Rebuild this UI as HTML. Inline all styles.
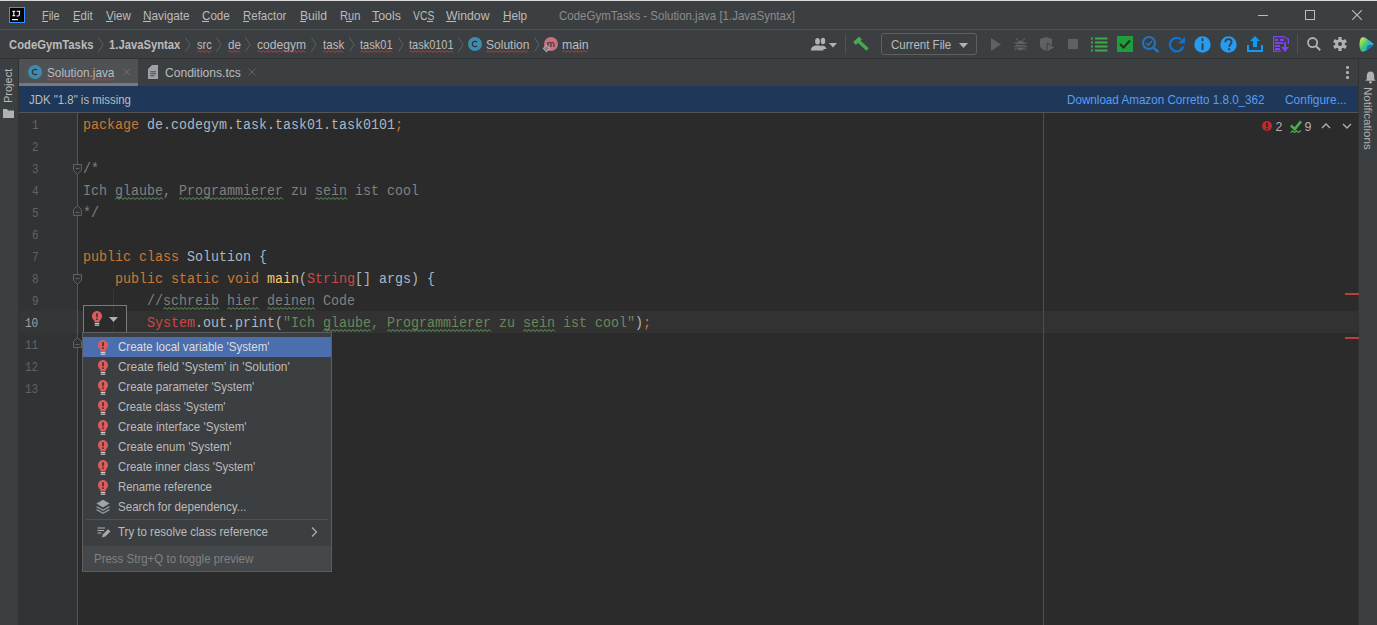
<!DOCTYPE html>
<html><head><meta charset="utf-8"><style>
html,body{margin:0;padding:0;}
body{width:1377px;height:625px;overflow:hidden;position:relative;background:#2B2B2B;}
body>div,body>svg{position:absolute;}
.t{white-space:pre;line-height:0;height:0;}
</style></head><body>
<div style="left:0px;top:0px;width:1377px;height:1px;background:#d9d9d9;"></div>
<div style="left:0px;top:1px;width:1377px;height:28px;background:#3C3F41;"></div>
<div style="left:0px;top:29px;width:1377px;height:1px;background:#515151;"></div>
<div style="left:0px;top:30px;width:1377px;height:28px;background:#3C3F41;"></div>
<div style="left:0px;top:58px;width:1377px;height:1px;background:#323232;"></div>
<div style="left:0px;top:59px;width:18px;height:566px;background:#3C3F41;"></div>
<div style="left:18px;top:59px;width:1px;height:566px;background:#323232;"></div>
<div style="left:1359px;top:59px;width:18px;height:566px;background:#3C3F41;"></div>
<div style="left:1358px;top:59px;width:1px;height:566px;background:#323232;"></div>
<div style="left:19px;top:59px;width:1339px;height:27px;background:#3C3F41;"></div>
<div style="left:19px;top:59px;width:119px;height:24px;background:#4E5254;"></div>
<div style="left:19px;top:83px;width:119px;height:3px;background:#747A80;"></div>
<div style="left:19px;top:86px;width:1339px;height:26px;background:#1F3859;"></div>
<div style="left:19px;top:112px;width:1339px;height:1px;background:#555555;"></div>
<div style="left:19px;top:113px;width:58px;height:512px;background:#313335;"></div>
<div style="left:77px;top:113px;width:1px;height:512px;background:#555555;"></div>
<div style="left:19px;top:311px;width:58px;height:22px;background:#343638;"></div>
<div style="left:78px;top:311px;width:1280px;height:22px;background:#323232;"></div>
<div style="left:1043px;top:113px;width:1px;height:512px;background:#4F4F4F;"></div>
<svg style="left:9px;top:7px;" width="16" height="16" viewBox="0 0 16 16" preserveAspectRatio="none"><rect x="0.5" y="0.5" width="15" height="15" fill="#000" stroke="#3592FF" stroke-width="1"/><path d="M3.3 4.2H6.3M4.8 4.2V8.8M3.3 8.8H6.3" stroke="#fff" stroke-width="1.1"/><path d="M7.6 4.2H11.2M10.4 4.2V7.6C10.4 8.5 9.8 9 9 9H7.6" fill="none" stroke="#fff" stroke-width="1.1"/><rect x="3" y="12" width="6" height="1.2" fill="#fff"/></svg>
<div class="t" style="left:42.3px;top:15.70px;font-family:'Liberation Sans', sans-serif;font-size:12.4px;color:#BBBBBB;transform:scale(0.8758,1.0000);transform-origin:0 4.30px;">File</div>
<div class="t" style="left:73px;top:15.70px;font-family:'Liberation Sans', sans-serif;font-size:12.4px;color:#BBBBBB;transform:scale(0.9220,1.0000);transform-origin:0 4.30px;">Edit</div>
<div class="t" style="left:106px;top:15.70px;font-family:'Liberation Sans', sans-serif;font-size:12.4px;color:#BBBBBB;transform:scale(0.9380,1.0000);transform-origin:0 4.30px;">View</div>
<div class="t" style="left:143.3px;top:15.70px;font-family:'Liberation Sans', sans-serif;font-size:12.4px;color:#BBBBBB;transform:scale(0.9542,1.0000);transform-origin:0 4.30px;">Navigate</div>
<div class="t" style="left:202px;top:15.70px;font-family:'Liberation Sans', sans-serif;font-size:12.4px;color:#BBBBBB;transform:scale(0.9378,1.0000);transform-origin:0 4.30px;">Code</div>
<div class="t" style="left:243.4px;top:15.70px;font-family:'Liberation Sans', sans-serif;font-size:12.4px;color:#BBBBBB;transform:scale(0.9261,1.0000);transform-origin:0 4.30px;">Refactor</div>
<div class="t" style="left:299.8px;top:15.70px;font-family:'Liberation Sans', sans-serif;font-size:12.4px;color:#BBBBBB;transform:scale(0.9792,1.0000);transform-origin:0 4.30px;">Build</div>
<div class="t" style="left:339.5px;top:15.70px;font-family:'Liberation Sans', sans-serif;font-size:12.4px;color:#BBBBBB;transform:scale(0.8968,1.0000);transform-origin:0 4.30px;">Run</div>
<div class="t" style="left:372px;top:15.70px;font-family:'Liberation Sans', sans-serif;font-size:12.4px;color:#BBBBBB;">Tools</div>
<div class="t" style="left:413px;top:15.70px;font-family:'Liberation Sans', sans-serif;font-size:12.4px;color:#BBBBBB;transform:scale(0.8393,1.0000);transform-origin:0 4.30px;">VCS</div>
<div class="t" style="left:446.3px;top:15.70px;font-family:'Liberation Sans', sans-serif;font-size:12.4px;color:#BBBBBB;transform:scale(0.9863,1.0000);transform-origin:0 4.30px;">Window</div>
<div class="t" style="left:503.4px;top:15.70px;font-family:'Liberation Sans', sans-serif;font-size:12.4px;color:#BBBBBB;transform:scale(0.9450,1.0000);transform-origin:0 4.30px;">Help</div>
<div class="t" style="left:558.5px;top:15.70px;font-family:'Liberation Sans', sans-serif;font-size:12.4px;color:#8C8C8C;transform:scale(0.9280,1.0000);transform-origin:0 4.30px;">CodeGymTasks - Solution.java [1.JavaSyntax]</div>
<div style="left:1258px;top:15px;width:10px;height:1px;background:#BBBBBB;"></div>
<div style="left:1305px;top:10px;width:10px;height:10px;background:transparent;box-sizing:border-box;border:1px solid #BBBBBB;"></div>
<svg style="left:1352px;top:10px;" width="10" height="10" viewBox="0 0 10 10" preserveAspectRatio="none"><path d="M0 0L10 10M10 0L0 10" stroke="#BBBBBB" stroke-width="1.1"/></svg>
<div class="t" style="left:8.7px;top:44.70px;font-family:'Liberation Sans', sans-serif;font-size:12.4px;color:#BBBBBB;font-weight:bold;transform:scale(0.9105,1.0000);transform-origin:0 4.30px;">CodeGymTasks</div>
<div class="t" style="left:109.4px;top:44.70px;font-family:'Liberation Sans', sans-serif;font-size:12.4px;color:#BBBBBB;font-weight:bold;transform:scale(0.9085,1.0000);transform-origin:0 4.30px;">1.JavaSyntax</div>
<div class="t" style="left:197px;top:44.70px;font-family:'Liberation Sans', sans-serif;font-size:12.4px;color:#BBBBBB;transform:scale(0.8954,1.0000);transform-origin:0 4.30px;">src</div>
<div class="t" style="left:228px;top:44.70px;font-family:'Liberation Sans', sans-serif;font-size:12.4px;color:#BBBBBB;transform:scale(0.9425,1.0000);transform-origin:0 4.30px;">de</div>
<div class="t" style="left:257px;top:44.70px;font-family:'Liberation Sans', sans-serif;font-size:12.4px;color:#BBBBBB;transform:scale(0.9739,1.0000);transform-origin:0 4.30px;">codegym</div>
<div class="t" style="left:322.9px;top:44.70px;font-family:'Liberation Sans', sans-serif;font-size:12.4px;color:#BBBBBB;transform:scale(0.9366,1.0000);transform-origin:0 4.30px;">task</div>
<div class="t" style="left:360px;top:44.70px;font-family:'Liberation Sans', sans-serif;font-size:12.4px;color:#BBBBBB;transform:scale(0.8923,1.0000);transform-origin:0 4.30px;">task01</div>
<div class="t" style="left:409px;top:44.70px;font-family:'Liberation Sans', sans-serif;font-size:12.4px;color:#BBBBBB;transform:scale(0.8862,1.0000);transform-origin:0 4.30px;">task0101</div>
<div class="t" style="left:486.3px;top:44.70px;font-family:'Liberation Sans', sans-serif;font-size:12.4px;color:#BBBBBB;transform:scale(0.9707,1.0000);transform-origin:0 4.30px;">Solution</div>
<div class="t" style="left:562px;top:44.70px;font-family:'Liberation Sans', sans-serif;font-size:12.4px;color:#BBBBBB;transform:scale(0.9934,1.0000);transform-origin:0 4.30px;">main</div>
<svg style="left:97.5px;top:37px;" width="6" height="15" viewBox="0 0 6 15" preserveAspectRatio="none"><path d="M0.5 0.5L5 7.5L0.5 14.5" fill="none" stroke="#5E6060" stroke-width="1"/></svg>
<svg style="left:185px;top:37px;" width="6" height="15" viewBox="0 0 6 15" preserveAspectRatio="none"><path d="M0.5 0.5L5 7.5L0.5 14.5" fill="none" stroke="#5E6060" stroke-width="1"/></svg>
<svg style="left:216px;top:37px;" width="6" height="15" viewBox="0 0 6 15" preserveAspectRatio="none"><path d="M0.5 0.5L5 7.5L0.5 14.5" fill="none" stroke="#5E6060" stroke-width="1"/></svg>
<svg style="left:245px;top:37px;" width="6" height="15" viewBox="0 0 6 15" preserveAspectRatio="none"><path d="M0.5 0.5L5 7.5L0.5 14.5" fill="none" stroke="#5E6060" stroke-width="1"/></svg>
<svg style="left:311px;top:37px;" width="6" height="15" viewBox="0 0 6 15" preserveAspectRatio="none"><path d="M0.5 0.5L5 7.5L0.5 14.5" fill="none" stroke="#5E6060" stroke-width="1"/></svg>
<svg style="left:349px;top:37px;" width="6" height="15" viewBox="0 0 6 15" preserveAspectRatio="none"><path d="M0.5 0.5L5 7.5L0.5 14.5" fill="none" stroke="#5E6060" stroke-width="1"/></svg>
<svg style="left:398px;top:37px;" width="6" height="15" viewBox="0 0 6 15" preserveAspectRatio="none"><path d="M0.5 0.5L5 7.5L0.5 14.5" fill="none" stroke="#5E6060" stroke-width="1"/></svg>
<svg style="left:458px;top:37px;" width="6" height="15" viewBox="0 0 6 15" preserveAspectRatio="none"><path d="M0.5 0.5L5 7.5L0.5 14.5" fill="none" stroke="#5E6060" stroke-width="1"/></svg>
<svg style="left:534px;top:37px;" width="6" height="15" viewBox="0 0 6 15" preserveAspectRatio="none"><path d="M0.5 0.5L5 7.5L0.5 14.5" fill="none" stroke="#5E6060" stroke-width="1"/></svg>
<svg style="left:197px;top:50px;" width="15.800000000000011" height="3" viewBox="0 0 15.800000000000011 3" preserveAspectRatio="none"><polyline points="0.0,2.5 2.0,0.5 4.0,2.5 6.0,0.5 8.0,2.5 10.0,0.5 12.0,2.5 14.0,0.5" fill="none" stroke="#BC3F3C" stroke-width="1"/></svg>
<svg style="left:228px;top:50px;" width="14" height="3" viewBox="0 0 14 3" preserveAspectRatio="none"><polyline points="0.0,2.5 2.0,0.5 4.0,2.5 6.0,0.5 8.0,2.5 10.0,0.5 12.0,2.5" fill="none" stroke="#BC3F3C" stroke-width="1"/></svg>
<svg style="left:257px;top:50px;" width="50" height="3" viewBox="0 0 50 3" preserveAspectRatio="none"><polyline points="0.0,2.5 2.0,0.5 4.0,2.5 6.0,0.5 8.0,2.5 10.0,0.5 12.0,2.5 14.0,0.5 16.0,2.5 18.0,0.5 20.0,2.5 22.0,0.5 24.0,2.5 26.0,0.5 28.0,2.5 30.0,0.5 32.0,2.5 34.0,0.5 36.0,2.5 38.0,0.5 40.0,2.5 42.0,0.5 44.0,2.5 46.0,0.5 48.0,2.5" fill="none" stroke="#BC3F3C" stroke-width="1"/></svg>
<svg style="left:322.9px;top:50px;" width="22.30000000000001" height="3" viewBox="0 0 22.30000000000001 3" preserveAspectRatio="none"><polyline points="0.0,2.5 2.0,0.5 4.0,2.5 6.0,0.5 8.0,2.5 10.0,0.5 12.0,2.5 14.0,0.5 16.0,2.5 18.0,0.5 20.0,2.5" fill="none" stroke="#BC3F3C" stroke-width="1"/></svg>
<svg style="left:360px;top:50px;" width="33.60000000000002" height="3" viewBox="0 0 33.60000000000002 3" preserveAspectRatio="none"><polyline points="0.0,2.5 2.0,0.5 4.0,2.5 6.0,0.5 8.0,2.5 10.0,0.5 12.0,2.5 14.0,0.5 16.0,2.5 18.0,0.5 20.0,2.5 22.0,0.5 24.0,2.5 26.0,0.5 28.0,2.5 30.0,0.5 32.0,2.5" fill="none" stroke="#BC3F3C" stroke-width="1"/></svg>
<svg style="left:409px;top:50px;" width="45.60000000000002" height="3" viewBox="0 0 45.60000000000002 3" preserveAspectRatio="none"><polyline points="0.0,2.5 2.0,0.5 4.0,2.5 6.0,0.5 8.0,2.5 10.0,0.5 12.0,2.5 14.0,0.5 16.0,2.5 18.0,0.5 20.0,2.5 22.0,0.5 24.0,2.5 26.0,0.5 28.0,2.5 30.0,0.5 32.0,2.5 34.0,0.5 36.0,2.5 38.0,0.5 40.0,2.5 42.0,0.5 44.0,2.5" fill="none" stroke="#BC3F3C" stroke-width="1"/></svg>
<svg style="left:486.3px;top:50px;" width="44.49999999999994" height="3" viewBox="0 0 44.49999999999994 3" preserveAspectRatio="none"><polyline points="0.0,2.5 2.0,0.5 4.0,2.5 6.0,0.5 8.0,2.5 10.0,0.5 12.0,2.5 14.0,0.5 16.0,2.5 18.0,0.5 20.0,2.5 22.0,0.5 24.0,2.5 26.0,0.5 28.0,2.5 30.0,0.5 32.0,2.5 34.0,0.5 36.0,2.5 38.0,0.5 40.0,2.5 42.0,0.5" fill="none" stroke="#BC3F3C" stroke-width="1"/></svg>
<svg style="left:562px;top:50px;" width="27.700000000000045" height="3" viewBox="0 0 27.700000000000045 3" preserveAspectRatio="none"><polyline points="0.0,2.5 2.0,0.5 4.0,2.5 6.0,0.5 8.0,2.5 10.0,0.5 12.0,2.5 14.0,0.5 16.0,2.5 18.0,0.5 20.0,2.5 22.0,0.5 24.0,2.5 26.0,0.5" fill="none" stroke="#BC3F3C" stroke-width="1"/></svg>
<svg style="left:468px;top:37px;" width="14" height="14" viewBox="0 0 14 14" preserveAspectRatio="none"><circle cx="7" cy="7" r="7" fill="#3D8BAD"/><path d="M9 5.2A2.7 2.7 0 1 0 9 8.8" fill="none" stroke="#2B2B2B" stroke-width="1.1"/></svg>
<svg style="left:542px;top:37px;" width="16" height="16" viewBox="0 0 16 16" preserveAspectRatio="none"><circle cx="9" cy="7" r="7" fill="#C7727F"/><path d="M5.9 10V5.3M5.9 6.3C6.5 5 8.9 5 8.9 6.5V10M8.9 6.5C9.4 5 11.9 5 11.9 6.5V10" fill="none" stroke="#2B2B2B" stroke-width="1"/><path d="M4.5 8.2L7.8 11.5L4.5 14.8L1.2 11.5Z" fill="#8A7F84" stroke="#BFC2C4" stroke-width="1"/></svg>
<div style="left:42px;top:21px;width:6px;height:1px;background:#BBBBBB;"></div>
<div style="left:73px;top:21px;width:6px;height:1px;background:#BBBBBB;"></div>
<div style="left:106px;top:21px;width:7px;height:1px;background:#BBBBBB;"></div>
<div style="left:143px;top:21px;width:8px;height:1px;background:#BBBBBB;"></div>
<div style="left:202px;top:21px;width:7px;height:1px;background:#BBBBBB;"></div>
<div style="left:243px;top:21px;width:6px;height:1px;background:#BBBBBB;"></div>
<div style="left:300px;top:21px;width:6px;height:1px;background:#BBBBBB;"></div>
<div style="left:346px;top:21px;width:6px;height:1px;background:#BBBBBB;"></div>
<div style="left:372px;top:21px;width:7px;height:1px;background:#BBBBBB;"></div>
<div style="left:427px;top:21px;width:6px;height:1px;background:#BBBBBB;"></div>
<div style="left:446px;top:21px;width:10px;height:1px;background:#BBBBBB;"></div>
<div style="left:503px;top:21px;width:7px;height:1px;background:#BBBBBB;"></div>
<div class="t" style="left:83.0px;top:125.27px;font-family:'Liberation Mono', monospace;font-size:14px;color:#CC7832;transform:scale(0.9522,1.0000);transform-origin:0 3.73px;">package</div>
<div class="t" style="left:147.0px;top:125.27px;font-family:'Liberation Mono', monospace;font-size:14px;color:#A9B7C6;transform:scale(0.9522,1.0000);transform-origin:0 3.73px;">de.codegym.task.task01.task0101</div>
<div class="t" style="left:395.0px;top:125.27px;font-family:'Liberation Mono', monospace;font-size:14px;color:#CC7832;transform:scale(0.9522,1.0000);transform-origin:0 3.73px;">;</div>
<div class="t" style="left:83.0px;top:169.27px;font-family:'Liberation Mono', monospace;font-size:14px;color:#808080;transform:scale(0.9522,1.0000);transform-origin:0 3.73px;">/*</div>
<div class="t" style="left:83.0px;top:191.27px;font-family:'Liberation Mono', monospace;font-size:14px;color:#808080;transform:scale(0.9522,1.0000);transform-origin:0 3.73px;">Ich glaube, Programmierer zu sein ist cool</div>
<div class="t" style="left:83.0px;top:213.27px;font-family:'Liberation Mono', monospace;font-size:14px;color:#808080;transform:scale(0.9522,1.0000);transform-origin:0 3.73px;">*/</div>
<div class="t" style="left:83.0px;top:257.27px;font-family:'Liberation Mono', monospace;font-size:14px;color:#CC7832;transform:scale(0.9522,1.0000);transform-origin:0 3.73px;">public class</div>
<div class="t" style="left:187.0px;top:257.27px;font-family:'Liberation Mono', monospace;font-size:14px;color:#A9B7C6;transform:scale(0.9522,1.0000);transform-origin:0 3.73px;">Solution {</div>
<div class="t" style="left:115.0px;top:279.27px;font-family:'Liberation Mono', monospace;font-size:14px;color:#CC7832;transform:scale(0.9522,1.0000);transform-origin:0 3.73px;">public static void</div>
<div class="t" style="left:267.0px;top:279.27px;font-family:'Liberation Mono', monospace;font-size:14px;color:#FFC66D;transform:scale(0.9522,1.0000);transform-origin:0 3.73px;">main</div>
<div class="t" style="left:299.0px;top:279.27px;font-family:'Liberation Mono', monospace;font-size:14px;color:#A9B7C6;transform:scale(0.9522,1.0000);transform-origin:0 3.73px;">(</div>
<div class="t" style="left:307.0px;top:279.27px;font-family:'Liberation Mono', monospace;font-size:14px;color:#CF4743;transform:scale(0.9522,1.0000);transform-origin:0 3.73px;">String</div>
<div class="t" style="left:355.0px;top:279.27px;font-family:'Liberation Mono', monospace;font-size:14px;color:#A9B7C6;transform:scale(0.9522,1.0000);transform-origin:0 3.73px;">[] args) {</div>
<div class="t" style="left:147.0px;top:301.27px;font-family:'Liberation Mono', monospace;font-size:14px;color:#808080;transform:scale(0.9522,1.0000);transform-origin:0 3.73px;">//schreib hier deinen Code</div>
<div class="t" style="left:147.0px;top:323.27px;font-family:'Liberation Mono', monospace;font-size:14px;color:#CF4743;transform:scale(0.9522,1.0000);transform-origin:0 3.73px;">System</div>
<div class="t" style="left:195.0px;top:323.27px;font-family:'Liberation Mono', monospace;font-size:14px;color:#A9B7C6;transform:scale(0.9522,1.0000);transform-origin:0 3.73px;">.out.print(</div>
<div class="t" style="left:283.0px;top:323.27px;font-family:'Liberation Mono', monospace;font-size:14px;color:#6A8759;transform:scale(0.9522,1.0000);transform-origin:0 3.73px;">&quot;Ich glaube, Programmierer zu sein ist cool&quot;</div>
<div class="t" style="left:635.0px;top:323.27px;font-family:'Liberation Mono', monospace;font-size:14px;color:#A9B7C6;transform:scale(0.9522,1.0000);transform-origin:0 3.73px;">)</div>
<div class="t" style="left:643.0px;top:323.27px;font-family:'Liberation Mono', monospace;font-size:14px;color:#CC7832;transform:scale(0.9522,1.0000);transform-origin:0 3.73px;">;</div>
<div class="t" style="left:31.7px;top:125.64px;font-family:'Liberation Mono', monospace;font-size:12.6px;color:#606366;transform:scale(0.8729,1.0000);transform-origin:0 3.36px;">1</div>
<div class="t" style="left:31.7px;top:147.64px;font-family:'Liberation Mono', monospace;font-size:12.6px;color:#606366;transform:scale(0.8729,1.0000);transform-origin:0 3.36px;">2</div>
<div class="t" style="left:31.7px;top:169.64px;font-family:'Liberation Mono', monospace;font-size:12.6px;color:#606366;transform:scale(0.8729,1.0000);transform-origin:0 3.36px;">3</div>
<div class="t" style="left:31.7px;top:191.64px;font-family:'Liberation Mono', monospace;font-size:12.6px;color:#606366;transform:scale(0.8729,1.0000);transform-origin:0 3.36px;">4</div>
<div class="t" style="left:31.7px;top:213.64px;font-family:'Liberation Mono', monospace;font-size:12.6px;color:#606366;transform:scale(0.8729,1.0000);transform-origin:0 3.36px;">5</div>
<div class="t" style="left:31.7px;top:235.64px;font-family:'Liberation Mono', monospace;font-size:12.6px;color:#606366;transform:scale(0.8729,1.0000);transform-origin:0 3.36px;">6</div>
<div class="t" style="left:31.7px;top:257.64px;font-family:'Liberation Mono', monospace;font-size:12.6px;color:#606366;transform:scale(0.8729,1.0000);transform-origin:0 3.36px;">7</div>
<div class="t" style="left:31.7px;top:279.64px;font-family:'Liberation Mono', monospace;font-size:12.6px;color:#606366;transform:scale(0.8729,1.0000);transform-origin:0 3.36px;">8</div>
<div class="t" style="left:31.7px;top:301.64px;font-family:'Liberation Mono', monospace;font-size:12.6px;color:#606366;transform:scale(0.8729,1.0000);transform-origin:0 3.36px;">9</div>
<div class="t" style="left:24.9px;top:323.64px;font-family:'Liberation Mono', monospace;font-size:12.6px;color:#A4A3A3;transform:scale(0.8729,1.0000);transform-origin:0 3.36px;">10</div>
<div class="t" style="left:24.9px;top:345.64px;font-family:'Liberation Mono', monospace;font-size:12.6px;color:#606366;transform:scale(0.8729,1.0000);transform-origin:0 3.36px;">11</div>
<div class="t" style="left:24.9px;top:367.64px;font-family:'Liberation Mono', monospace;font-size:12.6px;color:#606366;transform:scale(0.8729,1.0000);transform-origin:0 3.36px;">12</div>
<div class="t" style="left:24.9px;top:389.64px;font-family:'Liberation Mono', monospace;font-size:12.6px;color:#606366;transform:scale(0.8729,1.0000);transform-origin:0 3.36px;">13</div>
<svg style="left:115.0px;top:197px;" width="49.0" height="3" viewBox="0 0 49.0 3" preserveAspectRatio="none"><polyline points="0.0,2.5 2.0,0.5 4.0,2.5 6.0,0.5 8.0,2.5 10.0,0.5 12.0,2.5 14.0,0.5 16.0,2.5 18.0,0.5 20.0,2.5 22.0,0.5 24.0,2.5 26.0,0.5 28.0,2.5 30.0,0.5 32.0,2.5 34.0,0.5 36.0,2.5 38.0,0.5 40.0,2.5 42.0,0.5 44.0,2.5 46.0,0.5 48.0,2.5" fill="none" stroke="#5E9E5E" stroke-width="1"/></svg>
<svg style="left:179.0px;top:197px;" width="105.0" height="3" viewBox="0 0 105.0 3" preserveAspectRatio="none"><polyline points="0.0,2.5 2.0,0.5 4.0,2.5 6.0,0.5 8.0,2.5 10.0,0.5 12.0,2.5 14.0,0.5 16.0,2.5 18.0,0.5 20.0,2.5 22.0,0.5 24.0,2.5 26.0,0.5 28.0,2.5 30.0,0.5 32.0,2.5 34.0,0.5 36.0,2.5 38.0,0.5 40.0,2.5 42.0,0.5 44.0,2.5 46.0,0.5 48.0,2.5 50.0,0.5 52.0,2.5 54.0,0.5 56.0,2.5 58.0,0.5 60.0,2.5 62.0,0.5 64.0,2.5 66.0,0.5 68.0,2.5 70.0,0.5 72.0,2.5 74.0,0.5 76.0,2.5 78.0,0.5 80.0,2.5 82.0,0.5 84.0,2.5 86.0,0.5 88.0,2.5 90.0,0.5 92.0,2.5 94.0,0.5 96.0,2.5 98.0,0.5 100.0,2.5 102.0,0.5 104.0,2.5" fill="none" stroke="#5E9E5E" stroke-width="1"/></svg>
<svg style="left:315.0px;top:197px;" width="33.0" height="3" viewBox="0 0 33.0 3" preserveAspectRatio="none"><polyline points="0.0,2.5 2.0,0.5 4.0,2.5 6.0,0.5 8.0,2.5 10.0,0.5 12.0,2.5 14.0,0.5 16.0,2.5 18.0,0.5 20.0,2.5 22.0,0.5 24.0,2.5 26.0,0.5 28.0,2.5 30.0,0.5 32.0,2.5" fill="none" stroke="#5E9E5E" stroke-width="1"/></svg>
<svg style="left:163.0px;top:307px;" width="57.0" height="3" viewBox="0 0 57.0 3" preserveAspectRatio="none"><polyline points="0.0,2.5 2.0,0.5 4.0,2.5 6.0,0.5 8.0,2.5 10.0,0.5 12.0,2.5 14.0,0.5 16.0,2.5 18.0,0.5 20.0,2.5 22.0,0.5 24.0,2.5 26.0,0.5 28.0,2.5 30.0,0.5 32.0,2.5 34.0,0.5 36.0,2.5 38.0,0.5 40.0,2.5 42.0,0.5 44.0,2.5 46.0,0.5 48.0,2.5 50.0,0.5 52.0,2.5 54.0,0.5 56.0,2.5" fill="none" stroke="#5E9E5E" stroke-width="1"/></svg>
<svg style="left:227.0px;top:307px;" width="33.0" height="3" viewBox="0 0 33.0 3" preserveAspectRatio="none"><polyline points="0.0,2.5 2.0,0.5 4.0,2.5 6.0,0.5 8.0,2.5 10.0,0.5 12.0,2.5 14.0,0.5 16.0,2.5 18.0,0.5 20.0,2.5 22.0,0.5 24.0,2.5 26.0,0.5 28.0,2.5 30.0,0.5 32.0,2.5" fill="none" stroke="#5E9E5E" stroke-width="1"/></svg>
<svg style="left:267.0px;top:307px;" width="49.0" height="3" viewBox="0 0 49.0 3" preserveAspectRatio="none"><polyline points="0.0,2.5 2.0,0.5 4.0,2.5 6.0,0.5 8.0,2.5 10.0,0.5 12.0,2.5 14.0,0.5 16.0,2.5 18.0,0.5 20.0,2.5 22.0,0.5 24.0,2.5 26.0,0.5 28.0,2.5 30.0,0.5 32.0,2.5 34.0,0.5 36.0,2.5 38.0,0.5 40.0,2.5 42.0,0.5 44.0,2.5 46.0,0.5 48.0,2.5" fill="none" stroke="#5E9E5E" stroke-width="1"/></svg>
<svg style="left:323.0px;top:329px;" width="49.0" height="3" viewBox="0 0 49.0 3" preserveAspectRatio="none"><polyline points="0.0,2.5 2.0,0.5 4.0,2.5 6.0,0.5 8.0,2.5 10.0,0.5 12.0,2.5 14.0,0.5 16.0,2.5 18.0,0.5 20.0,2.5 22.0,0.5 24.0,2.5 26.0,0.5 28.0,2.5 30.0,0.5 32.0,2.5 34.0,0.5 36.0,2.5 38.0,0.5 40.0,2.5 42.0,0.5 44.0,2.5 46.0,0.5 48.0,2.5" fill="none" stroke="#5E9E5E" stroke-width="1"/></svg>
<svg style="left:387.0px;top:329px;" width="105.0" height="3" viewBox="0 0 105.0 3" preserveAspectRatio="none"><polyline points="0.0,2.5 2.0,0.5 4.0,2.5 6.0,0.5 8.0,2.5 10.0,0.5 12.0,2.5 14.0,0.5 16.0,2.5 18.0,0.5 20.0,2.5 22.0,0.5 24.0,2.5 26.0,0.5 28.0,2.5 30.0,0.5 32.0,2.5 34.0,0.5 36.0,2.5 38.0,0.5 40.0,2.5 42.0,0.5 44.0,2.5 46.0,0.5 48.0,2.5 50.0,0.5 52.0,2.5 54.0,0.5 56.0,2.5 58.0,0.5 60.0,2.5 62.0,0.5 64.0,2.5 66.0,0.5 68.0,2.5 70.0,0.5 72.0,2.5 74.0,0.5 76.0,2.5 78.0,0.5 80.0,2.5 82.0,0.5 84.0,2.5 86.0,0.5 88.0,2.5 90.0,0.5 92.0,2.5 94.0,0.5 96.0,2.5 98.0,0.5 100.0,2.5 102.0,0.5 104.0,2.5" fill="none" stroke="#5E9E5E" stroke-width="1"/></svg>
<svg style="left:523.0px;top:329px;" width="33.0" height="3" viewBox="0 0 33.0 3" preserveAspectRatio="none"><polyline points="0.0,2.5 2.0,0.5 4.0,2.5 6.0,0.5 8.0,2.5 10.0,0.5 12.0,2.5 14.0,0.5 16.0,2.5 18.0,0.5 20.0,2.5 22.0,0.5 24.0,2.5 26.0,0.5 28.0,2.5 30.0,0.5 32.0,2.5" fill="none" stroke="#5E9E5E" stroke-width="1"/></svg>
<svg style="left:73px;top:164px;" width="9" height="11" viewBox="0 0 9 11" preserveAspectRatio="none"><path d="M0.5 0.5H8.5V6.5L4.5 10.5L0.5 6.5Z" fill="#313335" stroke="#606060" stroke-width="1"/><path d="M2.5 4.5H6.5" stroke="#606060"/></svg>
<svg style="left:73px;top:205px;" width="9" height="11" viewBox="0 0 9 11" preserveAspectRatio="none"><path d="M0.5 10.5H8.5V4.5L4.5 0.5L0.5 4.5Z" fill="#313335" stroke="#606060" stroke-width="1"/><path d="M2.5 7.5H6.5" stroke="#606060"/></svg>
<svg style="left:73px;top:274px;" width="9" height="11" viewBox="0 0 9 11" preserveAspectRatio="none"><path d="M0.5 0.5H8.5V6.5L4.5 10.5L0.5 6.5Z" fill="#313335" stroke="#606060" stroke-width="1"/><path d="M2.5 4.5H6.5" stroke="#606060"/></svg>
<svg style="left:73px;top:337px;" width="9" height="11" viewBox="0 0 9 11" preserveAspectRatio="none"><path d="M0.5 10.5H8.5V4.5L4.5 0.5L0.5 4.5Z" fill="#313335" stroke="#606060" stroke-width="1"/><path d="M2.5 7.5H6.5" stroke="#606060"/></svg>
<div style="left:113px;top:289px;width:1px;height:22px;background:#393939;"></div>
<div style="left:1345px;top:293px;width:14px;height:2px;background:#BC3F3C;"></div>
<div style="left:1345px;top:337px;width:14px;height:2px;background:#BC3F3C;"></div>
<svg style="left:28px;top:65px;" width="14" height="14" viewBox="0 0 14 14" preserveAspectRatio="none"><circle cx="7" cy="7" r="7" fill="#3D8BAD"/><path d="M9 5.2A2.7 2.7 0 1 0 9 8.8" fill="none" stroke="#2B2B2B" stroke-width="1.1"/></svg>
<div class="t" style="left:47.3px;top:72.70px;font-family:'Liberation Sans', sans-serif;font-size:12.4px;color:#BBBBBB;transform:scale(0.9492,1.0000);transform-origin:0 4.30px;">Solution.java</div>
<svg style="left:47px;top:78px;" width="69" height="3" viewBox="0 0 69 3" preserveAspectRatio="none"><polyline points="0.0,2.5 2.0,0.5 4.0,2.5 6.0,0.5 8.0,2.5 10.0,0.5 12.0,2.5 14.0,0.5 16.0,2.5 18.0,0.5 20.0,2.5 22.0,0.5 24.0,2.5 26.0,0.5 28.0,2.5 30.0,0.5 32.0,2.5 34.0,0.5 36.0,2.5 38.0,0.5 40.0,2.5 42.0,0.5 44.0,2.5 46.0,0.5 48.0,2.5 50.0,0.5 52.0,2.5 54.0,0.5 56.0,2.5 58.0,0.5 60.0,2.5 62.0,0.5 64.0,2.5 66.0,0.5 68.0,2.5" fill="none" stroke="#BC3F3C" stroke-width="1"/></svg>
<svg style="left:123px;top:68px;" width="8" height="8" viewBox="0 0 8 8" preserveAspectRatio="none"><path d="M0.5 0.5L7.5 7.5M7.5 0.5L0.5 7.5" stroke="#6A6D70" stroke-width="1"/></svg>
<svg style="left:148px;top:65px;" width="10" height="14" viewBox="0 0 10 14" preserveAspectRatio="none"><path d="M4 0H10V14H0V4Z" fill="#9DA1A5"/><path d="M2.2 6.8H8M2.2 8.8H8M2.2 10.8H6.5" stroke="#3C3F41" stroke-width="0.9"/></svg>
<div class="t" style="left:165.3px;top:72.70px;font-family:'Liberation Sans', sans-serif;font-size:12.4px;color:#BBBBBB;transform:scale(0.9746,1.0000);transform-origin:0 4.30px;">Conditions.tcs</div>
<svg style="left:248px;top:68px;" width="8" height="8" viewBox="0 0 8 8" preserveAspectRatio="none"><path d="M0.5 0.5L7.5 7.5M7.5 0.5L0.5 7.5" stroke="#606366" stroke-width="1"/></svg>
<div style="left:1346px;top:66px;width:2.5px;height:2.5px;background:#AFB1B3;border-radius:50%;"></div>
<div style="left:1346px;top:71px;width:2.5px;height:2.5px;background:#AFB1B3;border-radius:50%;"></div>
<div style="left:1346px;top:76px;width:2.5px;height:2.5px;background:#AFB1B3;border-radius:50%;"></div>
<div class="t" style="left:29px;top:99.70px;font-family:'Liberation Sans', sans-serif;font-size:12.4px;color:#BBBBBB;transform:scale(0.9207,1.0000);transform-origin:0 4.30px;">JDK &quot;1.8&quot; is missing</div>
<div class="t" style="left:1067px;top:99.70px;font-family:'Liberation Sans', sans-serif;font-size:12.4px;color:#589DF6;transform:scale(0.9403,1.0000);transform-origin:0 4.30px;">Download Amazon Corretto 1.8.0_362</div>
<div class="t" style="left:1284.7px;top:99.70px;font-family:'Liberation Sans', sans-serif;font-size:12.4px;color:#589DF6;transform:scale(0.9625,1.0000);transform-origin:0 4.30px;">Configure...</div>
<div class="t" style="left:3px;top:102.5px;font-family:'Liberation Sans', sans-serif;font-size:11px;line-height:10px;height:10px;color:#BBBBBB;transform:rotate(-90deg);transform-origin:0 0;">Project</div>
<svg style="left:3px;top:109px;" width="11" height="9" viewBox="0 0 11 9" preserveAspectRatio="none"><path d="M0 0H4L5 1.5H11V9H0Z" fill="#AFB1B3"/></svg>
<svg style="left:1365px;top:71px;" width="11" height="13" viewBox="0 0 11 13" preserveAspectRatio="none"><path d="M5.5 0.5C3 0.5 1.8 2.5 1.8 5V8L0.3 9.8H10.7L9.2 8V5C9.2 2.5 8 0.5 5.5 0.5Z" fill="#AFB1B3"/><circle cx="5.5" cy="11.3" r="1.3" fill="#AFB1B3"/></svg>
<div class="t" style="left:1363px;top:87px;font-family:'Liberation Sans', sans-serif;font-size:11.5px;line-height:10px;height:10px;color:#AFB1B3;transform:rotate(90deg) translateY(-10px);transform-origin:0 0;">Notifications</div>
<svg style="left:1262px;top:121px;" width="10" height="10" viewBox="0 0 10 10" preserveAspectRatio="none"><circle cx="5" cy="5" r="5" fill="#C3282B"/><rect x="4.1" y="1.8" width="1.8" height="4.3" fill="#2B2B2B"/><rect x="4.1" y="7" width="1.8" height="1.6" fill="#2B2B2B"/></svg>
<div class="t" style="left:1275.5px;top:126.70px;font-family:'Liberation Sans', sans-serif;font-size:12.4px;color:#AFB1B3;">2</div>
<svg style="left:1290px;top:120px;" width="12" height="14" viewBox="0 0 12 14" preserveAspectRatio="none"><path d="M0.8 5.5L4.8 9L11 1.2" fill="none" stroke="#4DAA55" stroke-width="2.6"/><path d="M0.5 13L2.5 10.8L4.5 12.5L6.5 10.8L8.5 12.5L11 10.3" fill="none" stroke="#4DAA55" stroke-width="1.1"/></svg>
<div class="t" style="left:1304.5px;top:126.70px;font-family:'Liberation Sans', sans-serif;font-size:12.4px;color:#AFB1B3;">9</div>
<svg style="left:1321px;top:122px;" width="10" height="7" viewBox="0 0 10 7" preserveAspectRatio="none"><path d="M1 6L5 2L9 6" fill="none" stroke="#AFB1B3" stroke-width="1.3"/></svg>
<svg style="left:1342px;top:123px;" width="10" height="7" viewBox="0 0 10 7" preserveAspectRatio="none"><path d="M1 1L5 5L9 1" fill="none" stroke="#AFB1B3" stroke-width="1.3"/></svg>
<div style="left:83px;top:305px;width:44px;height:28px;background:#2B2B2B;box-sizing:border-box;border:1px solid #7A7A7A;border-bottom:none;"></div>
<div style="left:113px;top:306px;width:1px;height:27px;background:#393939;"></div>
<svg style="left:92px;top:311px;" width="10" height="15" viewBox="0 0 11 15" preserveAspectRatio="none"><path d="M5.5 0C2.5 0 0 2.3 0 5.2C0 7.2 1.2 8.5 2.5 9.5V11H8.5V9.5C9.8 8.5 11 7.2 11 5.2C11 2.3 8.5 0 5.5 0Z" fill="#DB5C5C"/><rect x="4.7" y="2.2" width="1.6" height="4" fill="#2B2B2B"/><rect x="4.7" y="7.3" width="1.6" height="1.6" fill="#2B2B2B"/><rect x="3" y="11.8" width="5" height="1.1" fill="#DDDDDD"/><rect x="3" y="13.6" width="5" height="1.1" fill="#DDDDDD"/></svg>
<svg style="left:109px;top:317px;" width="9" height="5" viewBox="0 0 9 5" preserveAspectRatio="none"><path d="M0 0H9L4.5 5Z" fill="#AFB1B3"/></svg>
<div style="left:82px;top:332px;width:250px;height:240px;background:#3C3F41;box-sizing:border-box;border:1px solid #5B5D5F;"></div>
<div style="left:83px;top:337px;width:248px;height:20px;background:#4B6EAF;"></div>
<div style="left:83px;top:546px;width:248px;height:25px;background:#45484A;"></div>
<div style="left:86px;top:519px;width:242px;height:1px;background:#515151;"></div>
<div class="t" style="left:117.7px;top:347.00px;font-family:'Liberation Sans', sans-serif;font-size:12.4px;color:#DDDDDD;transform:scale(0.9326,1.0000);transform-origin:0 4.30px;">Create local variable &#x27;System&#x27;</div>
<svg style="left:98px;top:340px;" width="10" height="15" viewBox="0 0 11 15" preserveAspectRatio="none"><path d="M5.5 0C2.5 0 0 2.3 0 5.2C0 7.2 1.2 8.5 2.5 9.5V11H8.5V9.5C9.8 8.5 11 7.2 11 5.2C11 2.3 8.5 0 5.5 0Z" fill="#DB5C5C"/><rect x="4.7" y="2.2" width="1.6" height="4" fill="#2B2B2B"/><rect x="4.7" y="7.3" width="1.6" height="1.6" fill="#2B2B2B"/><rect x="3" y="11.8" width="5" height="1.1" fill="#DDDDDD"/><rect x="3" y="13.6" width="5" height="1.1" fill="#DDDDDD"/></svg>
<div class="t" style="left:117.7px;top:367.00px;font-family:'Liberation Sans', sans-serif;font-size:12.4px;color:#BBBBBB;transform:scale(0.9597,1.0000);transform-origin:0 4.30px;">Create field &#x27;System&#x27; in &#x27;Solution&#x27;</div>
<svg style="left:98px;top:360px;" width="10" height="15" viewBox="0 0 11 15" preserveAspectRatio="none"><path d="M5.5 0C2.5 0 0 2.3 0 5.2C0 7.2 1.2 8.5 2.5 9.5V11H8.5V9.5C9.8 8.5 11 7.2 11 5.2C11 2.3 8.5 0 5.5 0Z" fill="#DB5C5C"/><rect x="4.7" y="2.2" width="1.6" height="4" fill="#2B2B2B"/><rect x="4.7" y="7.3" width="1.6" height="1.6" fill="#2B2B2B"/><rect x="3" y="11.8" width="5" height="1.1" fill="#DDDDDD"/><rect x="3" y="13.6" width="5" height="1.1" fill="#DDDDDD"/></svg>
<div class="t" style="left:117.7px;top:387.00px;font-family:'Liberation Sans', sans-serif;font-size:12.4px;color:#BBBBBB;transform:scale(0.9291,1.0000);transform-origin:0 4.30px;">Create parameter &#x27;System&#x27;</div>
<svg style="left:98px;top:380px;" width="10" height="15" viewBox="0 0 11 15" preserveAspectRatio="none"><path d="M5.5 0C2.5 0 0 2.3 0 5.2C0 7.2 1.2 8.5 2.5 9.5V11H8.5V9.5C9.8 8.5 11 7.2 11 5.2C11 2.3 8.5 0 5.5 0Z" fill="#DB5C5C"/><rect x="4.7" y="2.2" width="1.6" height="4" fill="#2B2B2B"/><rect x="4.7" y="7.3" width="1.6" height="1.6" fill="#2B2B2B"/><rect x="3" y="11.8" width="5" height="1.1" fill="#DDDDDD"/><rect x="3" y="13.6" width="5" height="1.1" fill="#DDDDDD"/></svg>
<div class="t" style="left:117.7px;top:407.00px;font-family:'Liberation Sans', sans-serif;font-size:12.4px;color:#BBBBBB;transform:scale(0.9077,1.0000);transform-origin:0 4.30px;">Create class &#x27;System&#x27;</div>
<svg style="left:98px;top:400px;" width="10" height="15" viewBox="0 0 11 15" preserveAspectRatio="none"><path d="M5.5 0C2.5 0 0 2.3 0 5.2C0 7.2 1.2 8.5 2.5 9.5V11H8.5V9.5C9.8 8.5 11 7.2 11 5.2C11 2.3 8.5 0 5.5 0Z" fill="#DB5C5C"/><rect x="4.7" y="2.2" width="1.6" height="4" fill="#2B2B2B"/><rect x="4.7" y="7.3" width="1.6" height="1.6" fill="#2B2B2B"/><rect x="3" y="11.8" width="5" height="1.1" fill="#DDDDDD"/><rect x="3" y="13.6" width="5" height="1.1" fill="#DDDDDD"/></svg>
<div class="t" style="left:117.7px;top:427.00px;font-family:'Liberation Sans', sans-serif;font-size:12.4px;color:#BBBBBB;transform:scale(0.9336,1.0000);transform-origin:0 4.30px;">Create interface &#x27;System&#x27;</div>
<svg style="left:98px;top:420px;" width="10" height="15" viewBox="0 0 11 15" preserveAspectRatio="none"><path d="M5.5 0C2.5 0 0 2.3 0 5.2C0 7.2 1.2 8.5 2.5 9.5V11H8.5V9.5C9.8 8.5 11 7.2 11 5.2C11 2.3 8.5 0 5.5 0Z" fill="#DB5C5C"/><rect x="4.7" y="2.2" width="1.6" height="4" fill="#2B2B2B"/><rect x="4.7" y="7.3" width="1.6" height="1.6" fill="#2B2B2B"/><rect x="3" y="11.8" width="5" height="1.1" fill="#DDDDDD"/><rect x="3" y="13.6" width="5" height="1.1" fill="#DDDDDD"/></svg>
<div class="t" style="left:117.7px;top:447.00px;font-family:'Liberation Sans', sans-serif;font-size:12.4px;color:#BBBBBB;transform:scale(0.9373,1.0000);transform-origin:0 4.30px;">Create enum &#x27;System&#x27;</div>
<svg style="left:98px;top:440px;" width="10" height="15" viewBox="0 0 11 15" preserveAspectRatio="none"><path d="M5.5 0C2.5 0 0 2.3 0 5.2C0 7.2 1.2 8.5 2.5 9.5V11H8.5V9.5C9.8 8.5 11 7.2 11 5.2C11 2.3 8.5 0 5.5 0Z" fill="#DB5C5C"/><rect x="4.7" y="2.2" width="1.6" height="4" fill="#2B2B2B"/><rect x="4.7" y="7.3" width="1.6" height="1.6" fill="#2B2B2B"/><rect x="3" y="11.8" width="5" height="1.1" fill="#DDDDDD"/><rect x="3" y="13.6" width="5" height="1.1" fill="#DDDDDD"/></svg>
<div class="t" style="left:117.7px;top:467.00px;font-family:'Liberation Sans', sans-serif;font-size:12.4px;color:#BBBBBB;transform:scale(0.9180,1.0000);transform-origin:0 4.30px;">Create inner class &#x27;System&#x27;</div>
<svg style="left:98px;top:460px;" width="10" height="15" viewBox="0 0 11 15" preserveAspectRatio="none"><path d="M5.5 0C2.5 0 0 2.3 0 5.2C0 7.2 1.2 8.5 2.5 9.5V11H8.5V9.5C9.8 8.5 11 7.2 11 5.2C11 2.3 8.5 0 5.5 0Z" fill="#DB5C5C"/><rect x="4.7" y="2.2" width="1.6" height="4" fill="#2B2B2B"/><rect x="4.7" y="7.3" width="1.6" height="1.6" fill="#2B2B2B"/><rect x="3" y="11.8" width="5" height="1.1" fill="#DDDDDD"/><rect x="3" y="13.6" width="5" height="1.1" fill="#DDDDDD"/></svg>
<div class="t" style="left:117.7px;top:487.00px;font-family:'Liberation Sans', sans-serif;font-size:12.4px;color:#BBBBBB;transform:scale(0.9153,1.0000);transform-origin:0 4.30px;">Rename reference</div>
<svg style="left:98px;top:480px;" width="10" height="15" viewBox="0 0 11 15" preserveAspectRatio="none"><path d="M5.5 0C2.5 0 0 2.3 0 5.2C0 7.2 1.2 8.5 2.5 9.5V11H8.5V9.5C9.8 8.5 11 7.2 11 5.2C11 2.3 8.5 0 5.5 0Z" fill="#DB5C5C"/><rect x="4.7" y="2.2" width="1.6" height="4" fill="#2B2B2B"/><rect x="4.7" y="7.3" width="1.6" height="1.6" fill="#2B2B2B"/><rect x="3" y="11.8" width="5" height="1.1" fill="#DDDDDD"/><rect x="3" y="13.6" width="5" height="1.1" fill="#DDDDDD"/></svg>
<div class="t" style="left:117.7px;top:507.00px;font-family:'Liberation Sans', sans-serif;font-size:12.4px;color:#BBBBBB;transform:scale(0.9336,1.0000);transform-origin:0 4.30px;">Search for dependency...</div>
<svg style="left:96px;top:499px;" width="14" height="16" viewBox="0 0 14 16" preserveAspectRatio="none"><path d="M7 0.8L13.6 4.6L7 8.4L0.4 4.6Z" fill="#9AA5AC"/><path d="M0.6 7.6L7 11.3L13.4 7.6" fill="none" stroke="#8E989F" stroke-width="1.4"/><path d="M0.6 10.6L7 14.3L13.4 10.6" fill="none" stroke="#8E989F" stroke-width="1.4"/></svg>
<div class="t" style="left:117.6px;top:531.70px;font-family:'Liberation Sans', sans-serif;font-size:12.4px;color:#BBBBBB;transform:scale(0.9255,1.0000);transform-origin:0 4.30px;">Try to resolve class reference</div>
<svg style="left:97px;top:527px;" width="14" height="11" viewBox="0 0 14 11" preserveAspectRatio="none"><path d="M0.5 1H8M0.5 3.5H7M0.5 6H4.5" stroke="#B0B3B5" stroke-width="1.1"/><path d="M5 10.5L6 7.2L11 2.2L13.4 4.5L8.3 9.5Z" fill="#A9ACAE"/></svg>
<svg style="left:311px;top:527px;" width="7" height="10" viewBox="0 0 7 10" preserveAspectRatio="none"><path d="M1 0.5L5.5 5L1 9.5" fill="none" stroke="#AFB1B3" stroke-width="1.2"/></svg>
<div class="t" style="left:93.6px;top:558.70px;font-family:'Liberation Sans', sans-serif;font-size:12.4px;color:#808080;transform:scale(0.9270,1.0000);transform-origin:0 4.30px;">Press Strg+Q to toggle preview</div>
<svg style="left:811px;top:37px;" width="16" height="14" viewBox="0 0 16 14" preserveAspectRatio="none"><ellipse cx="12" cy="4" rx="2.2" ry="3.2" fill="#AFB1B3"/><path d="M10 8.5C13 8.5 15 9.5 15.5 12L12 12Z" fill="#AFB1B3"/><ellipse cx="6.5" cy="4.3" rx="2.8" ry="3.6" fill="#3C3F41"/><ellipse cx="6.5" cy="4.3" rx="2.4" ry="3.2" fill="#AFB1B3"/><path d="M0 13.5C0 10 2 8.5 6.5 8.5C11 8.5 12.5 10 12.5 13.5Z" fill="#AFB1B3"/></svg>
<svg style="left:829px;top:43px;" width="8" height="5" viewBox="0 0 8 5" preserveAspectRatio="none"><path d="M0 0H8L4 4.5Z" fill="#AFB1B3"/></svg>
<div style="left:845px;top:34px;width:1px;height:20px;background:#515151;"></div>
<svg style="left:853px;top:37px;" width="16" height="15" viewBox="0 0 16 15" preserveAspectRatio="none"><path d="M1.5 6.5L7.5 1" stroke="#4AA853" stroke-width="4"/><path d="M6 4.5L14.5 12.5" stroke="#4AA853" stroke-width="3.4"/></svg>
<div style="left:881px;top:33px;width:96px;height:22px;background:transparent;box-sizing:border-box;border:1px solid #5E6060;border-radius:3px;"></div>
<div class="t" style="left:890.8px;top:45.00px;font-family:'Liberation Sans', sans-serif;font-size:12.4px;color:#BBBBBB;transform:scale(0.9294,1.0000);transform-origin:0 4.30px;">Current File</div>
<svg style="left:959px;top:42.5px;" width="9" height="5" viewBox="0 0 9 5" preserveAspectRatio="none"><path d="M0 0H9L4.5 5Z" fill="#AFB1B3"/></svg>
<svg style="left:991px;top:38px;" width="10" height="13" viewBox="0 0 10 13" preserveAspectRatio="none"><path d="M0 0L10 6.5L0 13Z" fill="#5F6163"/></svg>
<svg style="left:1014px;top:37px;" width="13" height="14" viewBox="0 0 13 14" preserveAspectRatio="none"><ellipse cx="6.5" cy="8.5" rx="4.2" ry="5" fill="#5F6163"/><path d="M2 1L4 3.5M11 1L9 3.5M0 6H13M0 9.5H13M0.5 13L2.5 11.5M12.5 13L10.5 11.5" stroke="#5F6163" stroke-width="1.2"/><path d="M3 7.5H10M3 10H10" stroke="#3C3F41" stroke-width="1"/></svg>
<svg style="left:1040px;top:37px;" width="16" height="15" viewBox="0 0 16 15" preserveAspectRatio="none"><path d="M0 2L6 0L12 2V8C12 11 9 13 6 14C3 13 0 11 0 8Z" fill="#5F6163"/><path d="M7 6L15 10.5L7 15Z" fill="#5F6163" stroke="#3C3F41" stroke-width="1"/></svg>
<div style="left:1068px;top:39px;width:10px;height:10px;background:#5F6163;"></div>
<svg style="left:1091px;top:37px;" width="17" height="15" viewBox="0 0 17 15" preserveAspectRatio="none"><g fill="#3DAA49"><rect x="0" y="0.5" width="2" height="2"/><rect x="0" y="4.5" width="2" height="2"/><rect x="0" y="8.5" width="2" height="2"/><rect x="0" y="12.5" width="2" height="2"/><rect x="4" y="0.5" width="12.5" height="2"/><rect x="4" y="4.5" width="12.5" height="2"/><rect x="4" y="8.5" width="12.5" height="2"/><rect x="4" y="12.5" width="12.5" height="2"/></g></svg>
<svg style="left:1117px;top:36px;" width="16" height="16" viewBox="0 0 16 16" preserveAspectRatio="none"><rect width="16" height="16" fill="#1E9E3A"/><path d="M3 8L6.5 11.5L13 4.5" fill="none" stroke="#2B2B2B" stroke-width="2"/></svg>
<svg style="left:1142px;top:36px;" width="18" height="17" viewBox="0 0 18 17" preserveAspectRatio="none"><circle cx="7" cy="7" r="6" fill="none" stroke="#1F74C4" stroke-width="2"/><path d="M4 7L6.3 9.2L10 5" fill="none" stroke="#1F74C4" stroke-width="1.6"/><path d="M11.2 11.5L16.5 16" stroke="#1F74C4" stroke-width="2.4"/></svg>
<svg style="left:1168px;top:36px;" width="18" height="17" viewBox="0 0 18 17" preserveAspectRatio="none"><path d="M13 3.3A6.8 6.8 0 1 0 15.3 10.5" fill="none" stroke="#1073C8" stroke-width="2.3"/><path d="M10 7.5H17V0.5Z" fill="#1073C8"/></svg>
<svg style="left:1194px;top:36px;" width="17" height="17" viewBox="0 0 17 17" preserveAspectRatio="none"><circle cx="8.5" cy="8.5" r="8.2" fill="#259CF2"/><rect x="7.5" y="2.2" width="2" height="3" fill="#3C3F41"/><rect x="7.5" y="7.3" width="2" height="6.6" fill="#3C3F41"/></svg>
<svg style="left:1220px;top:36px;" width="17" height="17" viewBox="0 0 17 17" preserveAspectRatio="none"><circle cx="8.5" cy="8.5" r="8.2" fill="#259CF2"/><path d="M5.3 6.2C5.3 4.3 6.7 3.2 8.5 3.2C10.4 3.2 11.6 4.4 11.6 5.9C11.6 8 9.2 8.4 9.2 11" fill="none" stroke="#3C3F41" stroke-width="1.8"/><rect x="8.2" y="12.3" width="2" height="2" fill="#3C3F41"/></svg>
<svg style="left:1247px;top:36px;" width="16" height="16" viewBox="0 0 16 16" preserveAspectRatio="none"><path d="M8 0L13 5H10V11H6V5H3Z" fill="#0D9BF5"/><path d="M1 9V15H15V9" fill="none" stroke="#0D9BF5" stroke-width="2"/></svg>
<svg style="left:1270px;top:34px;" width="20" height="20" viewBox="0 0 20 20" preserveAspectRatio="none"><g fill="#7C42F4"><path d="M3.6 17.4V2.6H13.8L18.4 5.2V9.9" fill="none" stroke="#7C42F4" stroke-width="1.2"/><path d="M3 17.2H11" stroke="#7C42F4" stroke-width="1.3"/><rect x="5" y="4.8" width="3" height="2.2"/><rect x="9.9" y="4.8" width="4.2" height="2.2"/><rect x="5" y="8" width="8.1" height="1.9"/><rect x="5" y="11" width="5" height="2"/><rect x="5" y="14" width="5" height="2"/><rect x="14.1" y="8" width="1.9" height="5.4"/><path d="M11 13.1H19L15 17.9Z"/></g></svg>
<div style="left:1297px;top:34px;width:1px;height:20px;background:#515151;"></div>
<svg style="left:1307px;top:37px;" width="14" height="14" viewBox="0 0 14 14" preserveAspectRatio="none"><circle cx="5.6" cy="5.6" r="4.6" fill="none" stroke="#AFB1B3" stroke-width="1.8"/><path d="M9 9L13.2 13.2" stroke="#AFB1B3" stroke-width="2"/></svg>
<svg style="left:1333px;top:37px;" width="14" height="14" viewBox="0 0 14 14" preserveAspectRatio="none"><g transform="translate(7 7)" fill="#AFB1B3"><circle r="4.8"/><g id="tt"><rect x="-1.6" y="-7" width="3.2" height="3"/></g><use href="#tt" transform="rotate(60)"/><use href="#tt" transform="rotate(120)"/><use href="#tt" transform="rotate(180)"/><use href="#tt" transform="rotate(240)"/><use href="#tt" transform="rotate(300)"/></g><circle cx="7" cy="7" r="2" fill="#3C3F41"/></svg>
<svg style="left:1359px;top:37px;" width="15" height="15" viewBox="0 0 15 15" preserveAspectRatio="none"><defs><linearGradient id="lg" x1="0" y1="0" x2="1" y2="1"><stop offset="0" stop-color="#F5EC3B"/><stop offset=".45" stop-color="#45C77A"/><stop offset="1" stop-color="#17A5D6"/></linearGradient></defs><path d="M1.8 1.2C3.3 0 5.3 0.2 7 1.2L13.8 6.3C14.6 7 14.6 8 13.8 8.7L7 13.8C5.3 14.8 3.3 15 1.8 13.8C0 10 0 5 1.8 1.2Z" fill="url(#lg)"/><path d="M8.5 8.3L14.3 7.5L13.8 8.7L7 13.8Z" fill="#1D6FD0"/><path d="M7 1.2L13.8 6.3L14.3 7.5L10 7.8Z" fill="#2BB3E0" opacity=".7"/></svg>
</body></html>
